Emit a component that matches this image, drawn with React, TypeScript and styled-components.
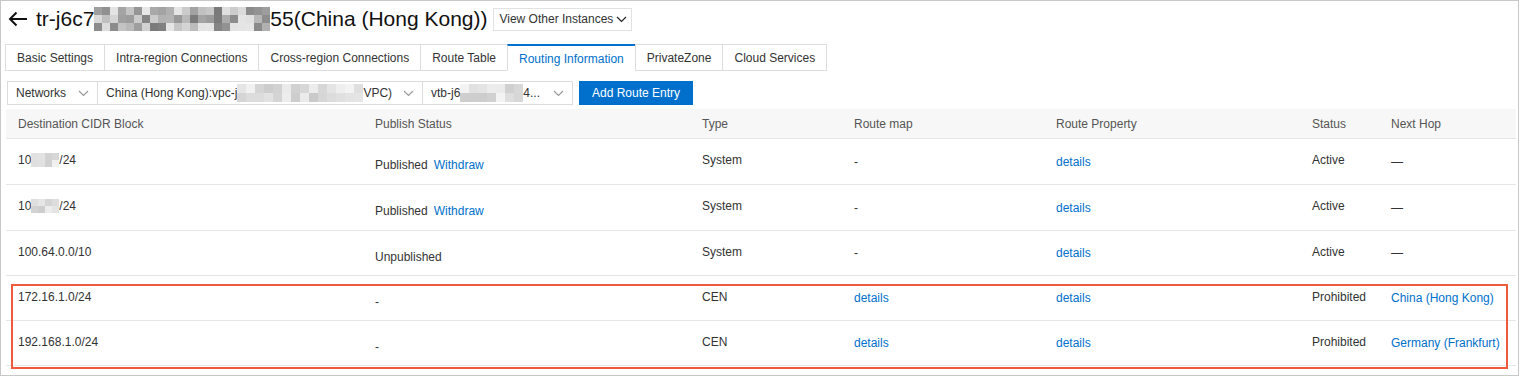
import React from 'react';
import styled, { createGlobalStyle, css } from 'styled-components';

const GlobalStyle = createGlobalStyle`
	body {
		margin: 0;
		font-family: 'Liberation Sans', Arial, sans-serif;
		color: #333;
		background: #fff;
	}
`;

const FONT = `'Liberation Sans', Arial, sans-serif`;
const BLUE = '#0070cc';

// pseudo random greys so the redacted bits look like a pixelated mosaic
function greys(count: number, seed: number, lo: number, hi: number) {
	const out: string[] = [];
	let s = seed;
	for (let i = 0; i < count; i++) {
		s = (s * 9301 + 49297) % 233280;
		const v = Math.round(lo + ((hi - lo) * s) / 233280);
		out.push(`rgb(${v},${v},${v})`);
	}
	return out;
}

type MosaicProps = {
	cols: number;
	rows: number;
	cell: number;
	seed: number;
	lo?: number;
	hi?: number;
};

function Mosaic({ cols, rows, cell, seed, lo = 150, hi = 235 }: MosaicProps) {
	const colors = greys(cols * rows, seed, lo, hi);
	return (
		<MosaicGrid $cols={cols} $cell={cell}>
			{colors.map((c, i) => (
				<span key={i} style={{ background: c }} />
			))}
		</MosaicGrid>
	);
}

const MosaicGrid = styled.span<{ $cols: number; $cell: number }>`
	display: inline-grid;
	grid-template-columns: repeat(${(p) => p.$cols}, ${(p) => p.$cell}px);
	grid-auto-rows: ${(p) => p.$cell}px;
	vertical-align: middle;
`;

const Chevron = ({ color = '#999' }: { color?: string }) => (
	<svg width="11" height="7" viewBox="0 0 11 7">
		<polyline
			points="1,1 5.5,5.5 10,1"
			fill="none"
			stroke={color}
			strokeWidth="1.2"
		/>
	</svg>
);

const Frame = styled.div`
	position: relative;
	width: 1519px;
	height: 376px;
	box-sizing: border-box;
	border: 1px solid #c8c8c8;
	overflow: hidden;
`;

const TitleBar = styled.div`
	display: flex;
	align-items: center;
	height: 36px;
	padding-left: 7px;
`;

const BackArrow = styled.svg`
	width: 20px;
	height: 16px;
	margin-right: 8px;
`;

const Title = styled.h1`
	margin: 0;
	font-family: ${FONT};
	font-size: 21px;
	font-weight: 400;
	color: #111;
	display: flex;
	align-items: center;
`;

const InstancesButton = styled.button`
	display: flex;
	align-items: center;
	gap: 3px;
	height: 23px;
	margin-left: 6px;
	padding: 0 4px 0 5px;
	border: 1px solid #e2e2e2;
	background: #fff;
	font-family: ${FONT};
	font-size: 12px;
	color: #333;
`;

const TabBar = styled.div`
	display: flex;
	margin-top: 7px;
	padding-left: 5px;
`;

const Tab = styled.div<{ $active?: boolean }>`
	height: 27px;
	box-sizing: border-box;
	display: flex;
	align-items: center;
	padding: 0 11px;
	font-size: 12px;
	border: 1px solid #ddd;
	margin-left: -1px;
	color: #333;
	background: #fff;
	${(p) =>
		p.$active &&
		css`
			color: ${BLUE};
			border-top: 2px solid ${BLUE};
			border-bottom-color: #fff;
			padding-top: 1px;
		`}
`;

const Toolbar = styled.div`
	display: flex;
	align-items: center;
	margin-top: 10px;
	padding-left: 6px;
	height: 24px;
`;

const Select = styled.div<{ $width: number }>`
	width: ${(p) => p.$width}px;
	height: 24px;
	box-sizing: border-box;
	display: flex;
	align-items: center;
	justify-content: space-between;
	padding: 0 8px;
	margin-right: -1px;
	border: 1px solid #dcdcdc;
	font-size: 12px;
	color: #333;
	white-space: nowrap;
`;

const SelectText = styled.span`
	display: flex;
	align-items: center;
`;

const PrimaryButton = styled.button`
	height: 24px;
	margin-left: 7px;
	padding: 0 13px;
	border: none;
	background: ${BLUE};
	color: #fff;
	font-family: ${FONT};
	font-size: 12px;
`;

const Table = styled.div`
	margin: 4px 0 0 5px;
	width: 1510px;
`;

const COLUMNS = '357px 327px 152px 202px 256px 79px 1fr';

const HeaderRow = styled.div`
	display: grid;
	grid-template-columns: ${COLUMNS};
	height: 30px;
	align-items: center;
	background: #f7f7f7;
	border-bottom: 1px solid #e6e6e6;
	box-sizing: border-box;
	font-size: 12px;
	color: #555;
`;

const Row = styled.div<{ $height: number }>`
	display: grid;
	grid-template-columns: ${COLUMNS};
	height: ${(p) => p.$height}px;
	align-items: center;
	border-bottom: 1px solid #e6e6e6;
	box-sizing: border-box;
	font-size: 12px;
	color: #333;
`;

// text in the reference sits a little above or below the row centre per column
const Cell = styled.div<{ $sink?: 'up' | 'down' }>`
	padding-left: 12px;
	white-space: nowrap;
	display: flex;
	align-items: center;
	${(p) => p.$sink === 'up' && 'padding-bottom: 3px;'}
	${(p) => p.$sink === 'down' && 'padding-top: 7px;'}
`;

const Link = styled.span<{ $gap?: boolean }>`
	color: ${BLUE};
	margin-left: ${(p) => (p.$gap ? '6px' : '0')};
`;

const Highlight = styled.div`
	position: absolute;
	left: 10px;
	top: 283px;
	width: 1497px;
	height: 85px;
	box-sizing: border-box;
	border: 2px solid #f05a3c;
	pointer-events: none;
`;

type RouteRow = {
	cidr: React.ReactNode;
	publish: React.ReactNode;
	type: string;
	routeMap: React.ReactNode;
	status: string;
	nextHop: React.ReactNode;
	height: number;
};

const redactedCidr = (seed: number) => (
	<>
		10
		<Mosaic cols={4} rows={2} cell={7} seed={seed} lo={205} hi={245} />
		/24
	</>
);

const published = (
	<>
		Published<Link $gap>Withdraw</Link>
	</>
);

const rows: RouteRow[] = [
	{ cidr: redactedCidr(7), publish: published, type: 'System', routeMap: '-', status: 'Active', nextHop: '—', height: 46 },
	{ cidr: redactedCidr(31), publish: published, type: 'System', routeMap: '-', status: 'Active', nextHop: '—', height: 46 },
	{ cidr: '100.64.0.0/10', publish: 'Unpublished', type: 'System', routeMap: '-', status: 'Active', nextHop: '—', height: 45 },
	{ cidr: '172.16.1.0/24', publish: '-', type: 'CEN', routeMap: <Link>details</Link>, status: 'Prohibited', nextHop: <Link>China (Hong Kong)</Link>, height: 45 },
	{ cidr: '192.168.1.0/24', publish: '-', type: 'CEN', routeMap: <Link>details</Link>, status: 'Prohibited', nextHop: <Link>Germany (Frankfurt)</Link>, height: 45 },
];

const tabs = [
	'Basic Settings',
	'Intra-region Connections',
	'Cross-region Connections',
	'Route Table',
	'Routing Information',
	'PrivateZone',
	'Cloud Services',
];

export default function App() {
	return (
		<>
			<GlobalStyle />
			<Frame>
				<TitleBar>
					<BackArrow viewBox="0 0 20 16">
						<path
							d="M19 8H2M8.5 1.5L2 8l6.5 6.5"
							fill="none"
							stroke="#111"
							strokeWidth="2"
						/>
					</BackArrow>
					<Title>
						tr-j6c7
						<Mosaic cols={22} rows={3} cell={8} seed={3} lo={120} hi={235} />
						55(China (Hong Kong))
					</Title>
					<InstancesButton type="button">
						View Other Instances
						<Chevron color="#222" />
					</InstancesButton>
				</TitleBar>

				<TabBar>
					{tabs.map((t) => (
						<Tab key={t} $active={t === 'Routing Information'}>
							{t}
						</Tab>
					))}
				</TabBar>

				<Toolbar>
					<Select $width={91}>
						<SelectText>Networks</SelectText>
						<Chevron />
					</Select>
					<Select $width={326}>
						<SelectText>
							China (Hong Kong):vpc-j
							<Mosaic cols={14} rows={2} cell={9} seed={11} lo={200} hi={245} />
							VPC)
						</SelectText>
						<Chevron />
					</Select>
					<Select $width={151}>
						<SelectText>
							vtb-j6
							<Mosaic cols={7} rows={2} cell={9} seed={19} lo={195} hi={245} />
							4...
						</SelectText>
						<Chevron />
					</Select>
					<PrimaryButton type="button">Add Route Entry</PrimaryButton>
				</Toolbar>

				<Table>
					<HeaderRow>
						<Cell>Destination CIDR Block</Cell>
						<Cell>Publish Status</Cell>
						<Cell>Type</Cell>
						<Cell>Route map</Cell>
						<Cell>Route Property</Cell>
						<Cell>Status</Cell>
						<Cell>Next Hop</Cell>
					</HeaderRow>
					{rows.map((r, i) => (
						<Row key={i} $height={r.height}>
							<Cell $sink="up">{r.cidr}</Cell>
							<Cell $sink="down">{r.publish}</Cell>
							<Cell $sink="up">{r.type}</Cell>
							<Cell>{r.routeMap}</Cell>
							<Cell>
								<Link>details</Link>
							</Cell>
							<Cell $sink="up">{r.status}</Cell>
							<Cell>{r.nextHop}</Cell>
						</Row>
					))}
				</Table>

				<Highlight />
			</Frame>
		</>
	);
}
